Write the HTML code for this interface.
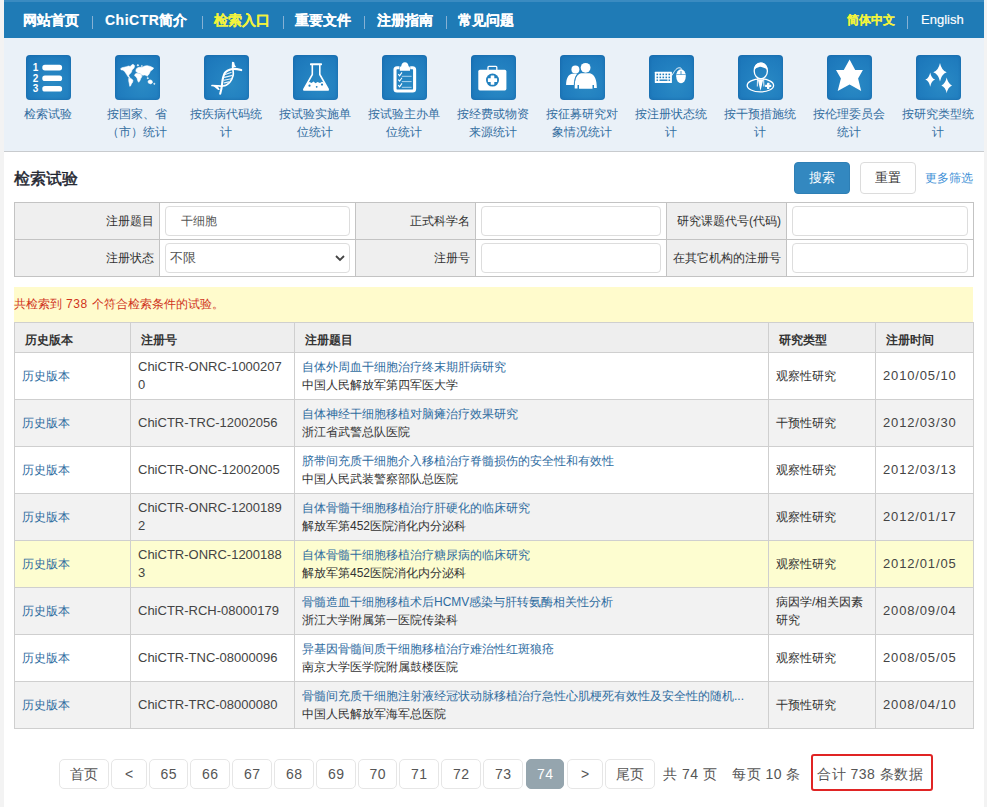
<!DOCTYPE html>
<html><head><meta charset="utf-8">
<style>
*{box-sizing:border-box}
html,body{margin:0;padding:0}
body{width:987px;height:807px;background:#f3f3f3;font-family:"Liberation Sans",sans-serif;color:#333;position:relative;overflow:hidden}
.a{position:absolute;white-space:nowrap}
#wrap{position:absolute;left:4px;top:0;width:980px;height:807px;background:#fff}
#nav{position:absolute;left:0;top:0;width:980px;height:38px;background:#1f7bb6;border-top:2px solid #3a8bc1}
#nav .t{position:absolute;top:10px;font-size:14px;font-weight:bold;color:#fff;line-height:16px;-webkit-text-stroke:0.15px currentColor}
#nav .s{position:absolute;top:14px;width:1px;height:13px;background:#86b1d4}
#icons{position:absolute;left:0;top:38px;width:980px;height:114px;background:#eaf1f8;border-bottom:1px solid #c8cbce}
.it{position:absolute;top:0;width:89px;text-align:center}
.ic{position:absolute;top:17px;width:45px;height:45px;border-radius:4px;background:radial-gradient(ellipse at 60% 65%,#2a8ac4 0%,#2280c0 45%,#1a74b8 100%);box-shadow:inset 0 0 3px rgba(10,60,120,0.35)}
.ic svg{display:block}
.lb{position:absolute;top:67px;left:-0.5px;width:89px;font-size:12px;line-height:18px;color:#336d9f;text-align:center}

#title{position:absolute;left:10px;top:169px;font-size:16px;font-weight:normal;color:#1e2530;line-height:20px;-webkit-text-stroke:0.45px #1e2530}
.btn{position:absolute;top:162px;height:32px;width:56px;border-radius:4px;font-size:13px;line-height:30px;text-align:center}
#bs{left:790px;background:#3388c0;color:#fff;border:1px solid #2e7fb5}
#br{left:856px;background:#fff;color:#333;border:1px solid #dcdcdc}
#more{position:absolute;left:921px;top:170px;font-size:12px;line-height:16px;color:#3d8fd6}
#ft{position:absolute;left:10px;top:202px;border-collapse:collapse;table-layout:fixed}
#ft td{border:1px solid #c3c3c3;height:37px;padding:0;font-size:12px;color:#333}
#ft td.l{background:#efefef;text-align:right;padding-right:5px}
#ft td.v{background:#fff;padding:0 5px}
.inp{height:30px;border:1px solid #dddddd;border-radius:4px;background:#fff;position:relative;font-size:13px;line-height:28px;color:#555}
#notice{position:absolute;left:10px;top:287px;width:959px;height:35px;background:#fffbcc;color:#d0341c;font-size:12px;line-height:35px}
#rt{position:absolute;left:10px;top:322px;border-collapse:collapse;table-layout:fixed}
#rt th,#rt td{border:1px solid #cfcfcf;padding:0;font-size:13px;text-align:left;vertical-align:middle}
#rt th{height:30px;background:#eeeeee;font-weight:bold;color:#333;font-size:12px;padding:5px 0 0 10px}
#rt td{height:47px;color:#444;padding-left:7px;line-height:18px}
#rt td.dt{letter-spacing:0.85px}
#rt tr.g td{background:#f2f2f2}
#rt tr.y td{background:#fdfdd0}
#rt a{color:#2f6c9f;text-decoration:none;font-size:12px}
#rt .t2{font-size:12px;color:#333}
.pg{position:absolute;top:759px;height:30px;border:1px solid #e6e6e6;border-radius:5px;background:#fff;color:#555;font-size:14px;line-height:28px;text-align:center;letter-spacing:0.6px;text-indent:0.6px}
.pt{position:absolute;top:765px;font-size:14px;line-height:18px;color:#555;letter-spacing:0.5px}
#redbox{position:absolute;left:807px;top:754px;width:122px;height:37px;border:2px solid #e02424;border-radius:3px}
</style></head><body>
<div id="wrap">
 <div id="nav">
  <span class="t" style="left:19px">网站首页</span>
  <span class="s" style="left:88px"></span>
  <span class="t" style="left:101px"><span style="letter-spacing:0.5px">ChiCTR</span>简介</span>
  <span class="s" style="left:198px"></span>
  <span class="t" style="left:210px;color:#f3f33c">检索入口</span>
  <span class="s" style="left:279px"></span>
  <span class="t" style="left:291px">重要文件</span>
  <span class="s" style="left:360px"></span>
  <span class="t" style="left:373px">注册指南</span>
  <span class="s" style="left:442px"></span>
  <span class="t" style="left:454px">常见问题</span>
  <span class="t" style="left:843px;font-size:12px;color:#f3f33c;top:10px">简体中文</span>
  <span class="s" style="left:903px"></span>
  <span class="t" style="left:917px;font-size:13px;font-weight:normal;top:10px">English</span>
 </div>
 <div id="icons">
  <div class="it" style="left:0px"><div class="ic" style="left:22px"><svg width="45" height="45" viewBox="0 0 45 45"><g fill="#fff" font-family="Liberation Sans" font-weight="bold" font-size="10"><text x="6.8" y="16">1</text><text x="6.8" y="26.5">2</text><text x="6.8" y="37.2">3</text>
<rect x="16.3" y="9.8" width="19.8" height="5.6" rx="2.6"/><rect x="16.3" y="20.4" width="19.8" height="5.6" rx="2.6"/><rect x="16.3" y="31" width="19.8" height="5.6" rx="2.6"/></g></svg></div><div class="lb">检索试验</div></div>
  <div class="it" style="left:89px"><div class="ic" style="left:22px"><svg width="45" height="45" viewBox="0 0 45 45"><g fill="#fff" stroke="#fff" stroke-width="0.6" stroke-linejoin="round"><path d="M5.63 13.69 L7.05 12.67 L9.08 12.27 L11.51 11.66 L13.54 11.05 L15.16 11.46 L16.37 10.24 L17.99 9.23 L19.62 10.65 L19.01 13.08 L17.59 14.50 L16.98 15.11 L16.58 16.73 L15.56 18.35 L14.35 19.16 L13.74 20.37 L14.35 21.99 L15.16 23.01 L14.14 22.81 L12.73 21.18 L11.71 19.56 L10.70 17.94 L9.48 16.32 L7.86 15.11 L6.24 14.90Z"/><path d="M13.74 23.21 L15.97 23.62 L17.99 25.24 L17.59 27.26 L16.37 28.88 L15.56 30.91 L14.75 31.32 L14.35 28.88 L13.74 26.05Z"/><path d="M21.24 13.89 L22.86 12.67 L24.48 12.27 L27.32 12.27 L29.75 11.05 L32.18 10.65 L35.42 11.46 L38.66 13.08 L37.45 14.70 L35.42 15.92 L34.61 17.94 L33.40 19.97 L32.18 21.18 L30.96 20.37 L29.34 19.97 L27.72 20.37 L26.10 19.16 L24.88 18.35 L23.26 17.94 L22.05 17.13 L20.83 16.32Z"/><path d="M20.02 19.16 L21.64 18.35 L24.07 18.75 L26.10 19.56 L26.91 21.59 L25.70 23.62 L24.88 25.64 L23.67 27.26 L22.86 26.05 L22.05 23.21 L20.83 21.59 L19.62 20.78Z"/><path d="M32.99 26.05 L35.02 24.83 L37.04 25.64 L37.45 27.67 L35.83 28.88 L33.40 28.07Z"/><circle cx="22.9" cy="10.3" r="0.7"/><circle cx="26.9" cy="11" r="0.5"/><circle cx="32.8" cy="23.2" r="0.6"/><circle cx="39.3" cy="28.8" r="0.6"/></g></svg></div><div class="lb">按国家、省<br>（市）统计</div></div>
  <div class="it" style="left:178px"><div class="ic" style="left:22px"><svg width="45" height="45" viewBox="0 0 45 45"><g fill="none" stroke="#fff" stroke-linecap="round">
<path d="M16.2 38.7 C17 36 17.8 32 18.1 28.8 C18.5 25 19 21 20.9 17.9 C22 16.2 24 14.9 28.3 13.9 C31 13.6 34 14.2 37.2 15.1" stroke-width="2.1"/>
<path d="M8 30.5 L13.4 30.8 C16 31 18 31.2 18.9 31 C20.5 30.8 21.5 30.5 22.4 30 C24 29 25 28.2 25.8 27.3 C27 25.8 28 24 28.3 22.8 C29 21 29.3 19.8 29.3 18.9 C29.3 17.5 29.1 16.4 29 15.4 L28.6 11.4 L28.8 7.5" stroke-width="1.7"/>
<path d="M21.2 19.4 L27.1 17.5 M20.5 22.4 L28.2 20.4 M20 25.3 L27.3 23.8 M20.4 27.9 L24.8 26.9" stroke-width="1.1" stroke="#e6f2fb"/>
</g>
<g fill="#fff"><path d="M28.2 7 L30.2 7.3 L30.8 10 L32.2 12 L28.2 12.4Z"/><path d="M8 30 L13.5 31 L15.9 34.7 L14.2 35 L10.5 32Z"/></g></svg></div><div class="lb">按疾病代码统<br>计</div></div>
  <div class="it" style="left:267px"><div class="ic" style="left:22px"><svg width="45" height="45" viewBox="0 0 45 45"><rect x="17" y="8.3" width="12" height="1.9" rx="0.4" fill="#fff"/>
<path d="M19.3 10 L19.3 19.5 L10.8 34.3 L35.3 34.3 L26.8 19.5 L26.8 10" fill="none" stroke="#fff" stroke-width="1.6" stroke-linejoin="round"/>
<path d="M14.5 27.5 L16.5 27 L18.5 28 L20.5 26.5 L22.5 28.3 L24.5 27 L27 28 L29 26.8 L31.2 27.5 L35.8 35.2 Q36 35.8 35.2 35.8 L10.8 35.8 Q10 35.8 10.3 35.2Z" fill="#fff"/>
<g fill="#2180bf"><circle cx="16.5" cy="30.7" r="1.1"/><circle cx="23.7" cy="31.8" r="0.9"/><circle cx="29" cy="29.6" r="1.1"/></g></svg></div><div class="lb">按试验实施单<br>位统计</div></div>
  <div class="it" style="left:356px"><div class="ic" style="left:22px"><svg width="45" height="45" viewBox="0 0 45 45"><path d="M17.5 12.8 L15 12.8 Q13 12.8 13 14.8 L13 34 Q13 36 15 36 L30.6 36 Q32.6 36 32.6 34 L32.6 14.8 Q32.6 12.8 30.6 12.8 L28.2 12.8" fill="none" stroke="#fff" stroke-width="3.1"/>
<path d="M17.8 15.8 L17.8 13 Q17.8 11.6 19.2 11.3 Q19.8 7.2 22.9 7.2 Q26 7.2 26.6 11.3 Q28 11.6 28 13 L28 15.8Z" fill="#fff"/>
<g fill="none" stroke="#fff" stroke-width="1.1"><path d="M16.3 19.2 L17.6 20.8 L20 17.4 M16.3 24.6 L17.6 26.2 L20 22.8 M16.3 30.2 L17.6 31.8 L20 28.4"/></g>
<path d="M19.8 21.3 H29.6 M19.8 26.6 H29.6 M19.8 32.3 H29.6" fill="none" stroke="#bcdcf3" stroke-width="0.9"/></svg></div><div class="lb">按试验主办单<br>位统计</div></div>
  <div class="it" style="left:445px"><div class="ic" style="left:22px"><svg width="45" height="45" viewBox="0 0 45 45"><rect x="7.3" y="14.8" width="28.1" height="20.6" rx="1.6" fill="#fff"/>
<path d="M17 14.9 L17 12.2 Q17 11.3 17.9 11.3 L24.9 11.3 Q25.8 11.3 25.8 12.2 L25.8 14.9" fill="none" stroke="#fff" stroke-width="1.3"/>
<circle cx="21.5" cy="25.1" r="6.5" fill="#2180bf"/>
<g fill="#fff"><rect x="19.7" y="20.5" width="3.6" height="9.2" rx="0.5"/><rect x="16.9" y="23.3" width="9.2" height="3.6" rx="0.5"/></g></svg></div><div class="lb">按经费或物资<br>来源统计</div></div>
  <div class="it" style="left:534px"><div class="ic" style="left:22px"><svg width="45" height="45" viewBox="0 0 45 45"><g fill="#fff"><circle cx="15.4" cy="14.4" r="4"/><path d="M6.1 30 C6.1 24 8 19.5 12 18.7 L17.5 18.7 C15.5 21 14.5 24 14.3 28.5 L14.3 30Z"/>
<circle cx="25.6" cy="12.8" r="4.9"/><path d="M14.7 33.5 C14.7 26 15.5 19.5 21 18.2 L30 18.2 C35 19.5 36.8 25 36.8 33 L34 33 L34 30 L32.5 30 L32.5 33.7 L19 33.7 L19 30 L17.5 30 L17.5 33.5Z"/></g>
<path d="M17.8 18.6 C15.3 21.5 14.3 25 14.3 30" fill="none" stroke="#2180bf" stroke-width="0.8"/></svg></div><div class="lb">按征募研究对<br>象情况统计</div></div>
  <div class="it" style="left:623px"><div class="ic" style="left:22px"><svg width="45" height="45" viewBox="0 0 45 45"><g fill="#fff"><rect x="5.8" y="16.7" width="17.1" height="11.2" rx="0.5"/><ellipse cx="32" cy="21.2" rx="4.8" ry="7"/></g>
<g fill="#2180bf"><rect x="7.5" y="18.6" width="1.6" height="1.6"/><rect x="10.5" y="18.6" width="1.6" height="1.6"/><rect x="13.5" y="18.6" width="1.6" height="1.6"/><rect x="16.5" y="18.6" width="1.6" height="1.6"/><rect x="19.5" y="18.6" width="1.6" height="1.6"/>
<rect x="7.5" y="21.6" width="1.6" height="1.6"/><rect x="10.5" y="21.6" width="1.6" height="1.6"/><rect x="13.5" y="21.6" width="1.6" height="1.6"/><rect x="16.5" y="21.6" width="1.6" height="1.6"/><rect x="19.5" y="21.6" width="1.6" height="1.6"/>
<rect x="7.5" y="24.5" width="1.6" height="1.4"/><rect x="10.5" y="24.5" width="8" height="1.4"/><rect x="19.5" y="24.5" width="1.6" height="1.4"/>
<path d="M27.3 19.5 H36.8" stroke="#2180bf" stroke-width="0.6"/><rect x="31.6" y="16" width="0.8" height="3.5"/></g>
<path d="M22.9 20.5 C25 17 27 13 30 12.8 C32 12.7 32.5 13.5 32.5 14.3" fill="none" stroke="#fff" stroke-width="0.9"/></svg></div><div class="lb">按注册状态统<br>计</div></div>
  <div class="it" style="left:712px"><div class="ic" style="left:22px"><svg width="45" height="45" viewBox="0 0 45 45"><g fill="none" stroke="#fff" stroke-width="1.3"><ellipse cx="22.8" cy="15.9" rx="6.6" ry="7.9"/><ellipse cx="22.4" cy="30.4" rx="13.2" ry="6.5"/></g>
<path d="M16.2 15.5 C15.8 10 18.5 7.9 22.8 7.9 C27 7.9 29.6 10 29.4 15.5 C28.5 13.5 27 13.2 25 12.6 C23.5 12.2 22.5 11.4 21.3 12 C19.5 12.8 17.2 13 16.2 15.5Z" fill="#fff"/>
<path d="M19.8 24.8 L22.5 35.8 L25.2 24.8 Z" fill="#fff"/>
<path d="M19.5 23.5 L19.3 31.5 M25.6 23.5 L25.9 31.5" fill="none" stroke="#fff" stroke-width="0.9"/>
<g fill="#fff"><rect x="29" y="27.8" width="2.4" height="6.2" rx="0.4"/><rect x="27.1" y="29.7" width="6.2" height="2.4" rx="0.4"/></g></svg></div><div class="lb">按干预措施统<br>计</div></div>
  <div class="it" style="left:801px"><div class="ic" style="left:22px"><svg width="45" height="45" viewBox="0 0 45 45"><path d="M22.6 4.5 L28.2 15.1 L35.9 15.1 L31.1 23.6 L34.2 35.9 L22.6 29.4 L10.7 35.9 L13.9 23.6 L9 15.1 L16.8 15.1Z" fill="#fff"/></svg></div><div class="lb">按伦理委员会<br>统计</div></div>
  <div class="it" style="left:890px"><div class="ic" style="left:22px"><svg width="45" height="45" viewBox="0 0 45 45"><g fill="#fff"><path d="M24 8.00 Q25.47 15.25 30.70 17.3 Q25.47 19.35 24 26.60 Q22.53 19.35 17.30 17.3 Q22.53 15.25 24 8.00Z"/><path d="M14.2 17.40 Q15.28 23.02 19.10 24.6 Q15.28 26.18 14.2 31.80 Q13.12 26.18 9.30 24.6 Q13.12 23.02 14.2 17.40Z"/><path d="M30.7 22.60 Q31.87 28.68 36.00 30.4 Q31.87 32.12 30.7 38.20 Q29.53 32.12 25.40 30.4 Q29.53 28.68 30.7 22.60Z"/></g></svg></div><div class="lb">按研究类型统<br>计</div></div>
 </div>

 <div id="title">检索试验</div>
 <div class="btn" id="bs">搜索</div>
 <div class="btn" id="br">重置</div>
 <div id="more">更多筛选</div>
 <table id="ft">
  <colgroup><col style="width:145px"><col style="width:196px"><col style="width:120px"><col style="width:191px"><col style="width:120px"><col style="width:187px"></colgroup>
  <tr><td class="l">注册题目</td><td class="v"><div class="inp" style="padding-left:15px;font-size:12px">干细胞</div></td><td class="l">正式科学名</td><td class="v"><div class="inp"></div></td><td class="l">研究课题代号(代码)</td><td class="v"><div class="inp"></div></td></tr>
  <tr><td class="l">注册状态</td><td class="v"><div class="inp" style="padding-left:4px">不限<svg style="position:absolute;right:4px;top:11px" width="10" height="7" viewBox="0 0 10 7"><path d="M1 1 L5 5 L9 1" fill="none" stroke="#444" stroke-width="1.8"/></svg></div></td><td class="l">注册号</td><td class="v"><div class="inp"></div></td><td class="l">在其它机构的注册号</td><td class="v"><div class="inp"></div></td></tr>
 </table>
 <div id="notice">共检索到<span style="letter-spacing:0.6px"> 738 </span>个符合检索条件的试验。</div>
 <table id="rt">
  <colgroup><col style="width:116px"><col style="width:164px"><col style="width:474px"><col style="width:107px"><col style="width:98px"></colgroup>
  <tr><th>历史版本</th><th>注册号</th><th>注册题目</th><th>研究类型</th><th>注册时间</th></tr>
  <tr class=""><td><a>历史版本</a></td><td class="rn">ChiCTR-ONRC-1000207<br>0</td><td><a>自体外周血干细胞治疗终末期肝病研究</a><br><span class="t2">中国人民解放军第四军医大学</span></td><td class="t2">观察性研究</td><td class="dt">2010/05/10</td></tr>
  <tr class="g"><td><a>历史版本</a></td><td class="rn">ChiCTR-TRC-12002056</td><td><a>自体神经干细胞移植对脑瘫治疗效果研究</a><br><span class="t2">浙江省武警总队医院</span></td><td class="t2">干预性研究</td><td class="dt">2012/03/30</td></tr>
  <tr class=""><td><a>历史版本</a></td><td class="rn">ChiCTR-ONC-12002005</td><td><a>脐带间充质干细胞介入移植治疗脊髓损伤的安全性和有效性</a><br><span class="t2">中国人民武装警察部队总医院</span></td><td class="t2">观察性研究</td><td class="dt">2012/03/13</td></tr>
  <tr class="g"><td><a>历史版本</a></td><td class="rn">ChiCTR-ONRC-1200189<br>2</td><td><a>自体骨髓干细胞移植治疗肝硬化的临床研究</a><br><span class="t2">解放军第452医院消化内分泌科</span></td><td class="t2">观察性研究</td><td class="dt">2012/01/17</td></tr>
  <tr class="y"><td><a>历史版本</a></td><td class="rn">ChiCTR-ONRC-1200188<br>3</td><td><a>自体骨髓干细胞移植治疗糖尿病的临床研究</a><br><span class="t2">解放军第452医院消化内分泌科</span></td><td class="t2">观察性研究</td><td class="dt">2012/01/05</td></tr>
  <tr class="g"><td><a>历史版本</a></td><td class="rn">ChiCTR-RCH-08000179</td><td><a>骨髓造血干细胞移植术后HCMV感染与肝转氨酶相关性分析</a><br><span class="t2">浙江大学附属第一医院传染科</span></td><td class="t2">病因学/相关因素<br>研究</td><td class="dt">2008/09/04</td></tr>
  <tr class=""><td><a>历史版本</a></td><td class="rn">ChiCTR-TNC-08000096</td><td><a>异基因骨髓间质干细胞移植治疗难治性红斑狼疮</a><br><span class="t2">南京大学医学院附属鼓楼医院</span></td><td class="t2">观察性研究</td><td class="dt">2008/05/05</td></tr>
  <tr class="g"><td><a>历史版本</a></td><td class="rn">ChiCTR-TRC-08000080</td><td><a>骨髓间充质干细胞注射液经冠状动脉移植治疗急性心肌梗死有效性及安全性的随机...</a><br><span class="t2">中国人民解放军海军总医院</span></td><td class="t2">干预性研究</td><td class="dt">2008/04/10</td></tr>
 </table>
 <div class="pg" style="left:55px;width:50px">首页</div>
 <div class="pg" style="left:107px;width:36px">&lt;</div>
 <div class="pg" style="left:145px;width:39px">65</div>
 <div class="pg" style="left:186px;width:40px">66</div>
 <div class="pg" style="left:228px;width:40px">67</div>
 <div class="pg" style="left:270px;width:40px">68</div>
 <div class="pg" style="left:312px;width:40px">69</div>
 <div class="pg" style="left:354px;width:39px">70</div>
 <div class="pg" style="left:395px;width:40px">71</div>
 <div class="pg" style="left:437px;width:40px">72</div>
 <div class="pg" style="left:479px;width:40px">73</div>
 <div class="pg" style="left:522px;width:38px;background:#95a5ae;border-color:#95a5ae;color:#fff">74</div>
 <div class="pg" style="left:563px;width:36px">&gt;</div>
 <div class="pg" style="left:601px;width:50px">尾页</div>
 <div class="pt" style="left:659px">共 74 页</div>
 <div class="pt" style="left:728px">每页 10 条</div>
 <div class="pt" style="left:813px">合计 738 条数据</div>
 <div id="redbox"></div>
</div>
</body></html>
